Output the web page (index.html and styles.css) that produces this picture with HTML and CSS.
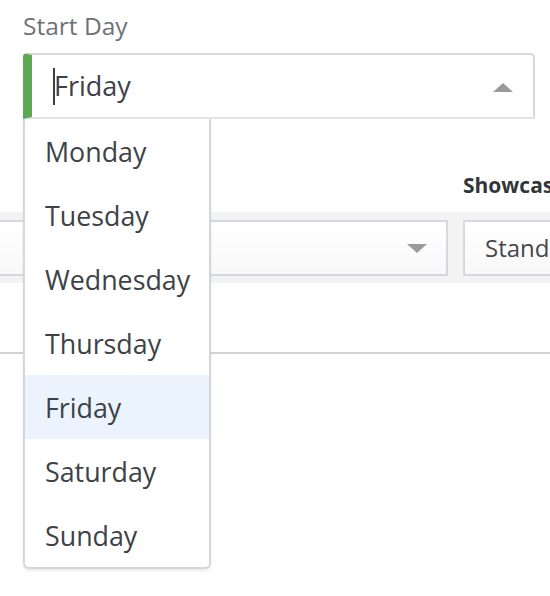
FILE: index.html
```html
<!DOCTYPE html>
<html lang="en">
<head>
<meta charset="utf-8">
<title>Start Day</title>
<link rel="stylesheet" href="styles.css">
</head>
<body>
<div class="page">
  <div class="field">
    <label class="field-label">Start Day</label>
    <div class="select is-open">
      <span class="caret"></span>
      <span class="select-value">Friday</span>
      <span class="arrow-up"></span>
    </div>
    <ul class="menu">
      <li class="menu-item">Monday</li>
      <li class="menu-item">Tuesday</li>
      <li class="menu-item">Wednesday</li>
      <li class="menu-item">Thursday</li>
      <li class="menu-item is-active">Friday</li>
      <li class="menu-item">Saturday</li>
      <li class="menu-item">Sunday</li>
    </ul>
  </div>

  <div class="settings">
    <div class="settings-labels">
      <span></span>
      <span class="settings-label">Showcase</span>
    </div>
    <div class="band">
      <div class="box box-select"><span class="arrow-down"></span></div>
      <div class="box box-text">Standard</div>
    </div>
  </div>
  <div class="divider"></div>
</div>
</body>
</html>
```

FILE: styles.css
```css
* { box-sizing: border-box; }

html, body {
  margin: 0;
  padding: 0;
  background: #ffffff;
}

body {
  font-family: "Open Sans", "Liberation Sans", sans-serif;
  color: #3d4247;
  width: 550px;
  height: 596px;
  overflow: hidden;
}

.page {
  width: 550px;
  height: 596px;
  overflow: hidden;
  position: relative;
}

.field {
  position: relative;
  padding: 11px 15px 0 23px;
  z-index: 2;
}

.field-label {
  display: block;
  font-size: 24.5px;
  line-height: 30px;
  color: #6d7278;
  margin-bottom: 12px;
}

.select {
  display: flex;
  align-items: center;
  height: 66px;
  border: 2px solid #d6d9dc;
  border-bottom-color: #e2e4e6;
  border-left: 9px solid #5ca855;
  border-radius: 4px 5px 0 0;
  padding: 0 20px 0 21px;
  background: #fff;
}

.caret {
  display: block;
  width: 2px;
  height: 37px;
  background: #3a3f44;
  margin-right: -1px;
}

.select-value {
  font-size: 27px;
  line-height: 62px;
  color: #3d4247;
}

.arrow-up {
  margin-left: auto;
  width: 0;
  height: 0;
  border-left: 10px solid transparent;
  border-right: 10px solid transparent;
  border-bottom: 9px solid #9a9a9a;
  margin-top: 2px;
}

.menu {
  position: absolute;
  top: 119px;
  left: 23px;
  width: 188px;
  margin: 0;
  padding: 0;
  list-style: none;
  background: #fff;
  border: 2px solid #d3d6da;
  border-top: none;
  border-radius: 0 0 6px 6px;
  box-shadow: 0 2px 3px rgba(0, 0, 0, 0.08);
  overflow: hidden;
}

.menu-item {
  height: 64px;
  line-height: 65px;
  font-size: 26.8px;
  padding-left: 20px;
  color: #3d4247;
  white-space: nowrap;
}

.menu-item.is-active {
  background: #ebf4fe;
}

.settings {
  margin-top: 53px;
}

.settings-labels {
  display: grid;
  grid-template-columns: 448px 1fr;
  column-gap: 15px;
  height: 26px;
  margin-bottom: 14px;
}

.settings-label {
  font-size: 21px;
  line-height: 26px;
  font-weight: 700;
  color: #333638;
  white-space: nowrap;
}

.band {
  display: grid;
  grid-template-columns: 448px 200px;
  column-gap: 15px;
  background: #f3f3f3;
  padding: 8px 0 7px;
}

.box {
  height: 56px;
  border: 2px solid #d5d8dc;
  background: linear-gradient(#ffffff, #f8f8f8);
}

.box-select {
  border-left: none;
  display: flex;
  align-items: center;
  justify-content: flex-end;
  padding-right: 19px;
}

.arrow-down {
  width: 0;
  height: 0;
  border-left: 10px solid transparent;
  border-right: 10px solid transparent;
  border-top: 9px solid #9a9a9a;
}

.box-text {
  font-size: 24px;
  line-height: 52px;
  padding-left: 20px;
  color: #44484c;
  white-space: nowrap;
}

.divider {
  margin-top: 69px;
  height: 2px;
  background: #d2d2d2;
}
```
